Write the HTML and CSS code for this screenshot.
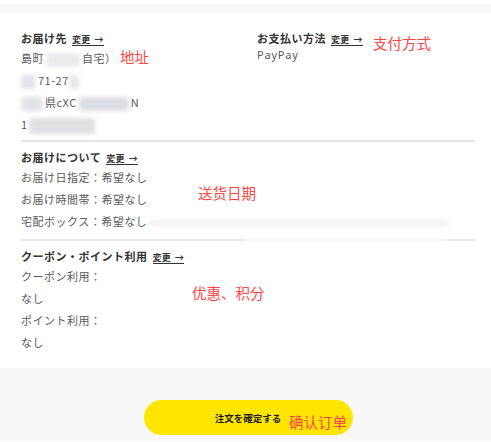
FILE: index.html
```html
<!DOCTYPE html>
<html lang="ja">
<head>
<meta charset="utf-8">
<title>注文確認</title>
<link rel="stylesheet" href="styles.css">
</head>
<body>
<div class="page">
  <div class="top-band"></div>
  <main class="main">
    <section class="section section-first">
      <div class="cols">
        <div class="col">
          <h2 class="heading">お届け先<a class="change">変更<span class="arrow">→</span></a></h2>
          <p class="line">島町<span class="blur b1"></span>自宅）</p>
          <p class="line"><span class="blur b2"></span>71-27<span class="blur b3"></span></p>
          <p class="line"><span class="blur b4"></span>県cXC<span class="blur b5"></span>N</p>
          <p class="line">1<span class="blur b6"></span></p>
        </div>
        <div class="col">
          <h2 class="heading">お支払い方法<a class="change">変更<span class="arrow">→</span></a></h2>
          <p class="pay">PayPay</p>
        </div>
      </div>
    </section>
    <section class="section">
      <h2 class="heading">お届けについて<a class="change">変更<span class="arrow">→</span></a></h2>
      <p class="line">お届け日指定：希望なし</p>
      <p class="line">お届け時間帯：希望なし</p>
      <p class="line">宅配ボックス：希望なし<span class="blur b7"></span></p>
    </section>
    <section class="section section-last">
      <h2 class="heading">クーポン・ポイント利用<a class="change">変更<span class="arrow">→</span></a></h2>
      <p class="line">クーポン利用：</p>
      <p class="line">なし</p>
      <p class="line">ポイント利用：</p>
      <p class="line">なし</p>
    </section>
  </main>
  <footer class="footer">
    <button class="confirm">注文を確定する</button>
  </footer>
  <span class="smudge s1"></span>
  <span class="note n1">地址</span>
  <span class="note n2">支付方式</span>
  <span class="note n3">送货日期</span>
  <span class="note n4">优惠、积分</span>
  <span class="note n5">确认订单</span>
</div>
</body>
</html>
```
FILE: styles.css
```css
html, body {
  margin: 0;
  padding: 0;
  background: #ffffff;
}
body {
  font-family: "Noto Sans CJK JP", "Noto Sans", sans-serif;
  color: #555555;
}
.page {
  position: relative;
  width: 491px;
  height: 442px;
  overflow: hidden;
  padding-top: 4px;
  box-sizing: border-box;
}
.top-band {
  height: 9px;
  background: #f8f8f8;
}
.main {
  padding: 0 16px 0 21px;
}
.section {
  padding: 6px 0 7px;
  border-top: 2px solid #e6e6e6;
}
.section-first {
  border-top: none;
  padding-top: 16px;
  padding-bottom: 5px;
}
.section-last {
  padding-bottom: 15px;
}
.cols {
  display: grid;
  grid-template-columns: 236px 1fr;
}
.heading {
  margin: 0;
  font-size: 11px;
  line-height: 18px;
  font-weight: 700;
  color: #333333;
  letter-spacing: 0.5px;
}
.change {
  display: inline-block;
  margin-left: 5px;
  font-size: 9px;
  line-height: 11px;
  font-weight: 700;
  color: #333333;
  letter-spacing: 0.3px;
  border-bottom: 1.5px solid #333333;
}
.arrow {
  margin-left: 4px;
}
.line {
  margin: 0;
  font-size: 11px;
  line-height: 22px;
  letter-spacing: 0.5px;
  color: #5a5a5a;
  white-space: nowrap;
}
.pay {
  margin: 0;
  font-size: 11px;
  line-height: 16px;
  letter-spacing: 0.8px;
  color: #5a5a5a;
  font-family: "Noto Sans", sans-serif;
}
.blur {
  display: inline-block;
  height: 14px;
  vertical-align: middle;
  background: #e4e4e8;
  filter: blur(2px);
  border-radius: 3px;
}
.b1 { width: 34px; margin: 0 2px; background: #ebebee; }
.b2 { width: 14px; margin-right: 3px; }
.b3 { width: 10px; background: #e8e8ea; }
.b4 { width: 22px; margin-right: 2px; }
.b5 { width: 50px; margin: 0 2px; background: #dcdce4; }
.b6 { width: 66px; height: 16px; margin-left: 1px; background: #e0e0e2; }
.b7 { width: 300px; height: 6px; margin-left: 2px; background: #f0f0f0; }
.footer {
  height: 73px;
  background: #f8f8f8;
  display: flex;
  justify-content: center;
  padding-top: 32px;
  box-sizing: border-box;
}
.confirm {
  width: 209px;
  height: 35px;
  border: none;
  border-radius: 18px;
  background: #ffe500;
  color: #222222;
  font-family: "Noto Sans CJK JP", sans-serif;
  font-size: 9.5px;
  font-weight: 700;
  padding: 0;
  margin-left: 5px;
}
.smudge {
  position: absolute;
  background: #ffffff;
  filter: blur(3px);
}
.s1 { left: 244px; top: 235px; width: 202px; height: 8px; }
.note {
  position: absolute;
  font-family: "Noto Sans CJK SC", sans-serif;
  font-size: 14.5px;
  line-height: 18px;
  color: #ff4545;
  white-space: nowrap;
}
.n1 { left: 120px; top: 48px; }
.n2 { left: 373px; top: 34px; }
.n3 { left: 198px; top: 184px; }
.n4 { left: 192px; top: 284px; }
.n5 { left: 289px; top: 413px; }
```
